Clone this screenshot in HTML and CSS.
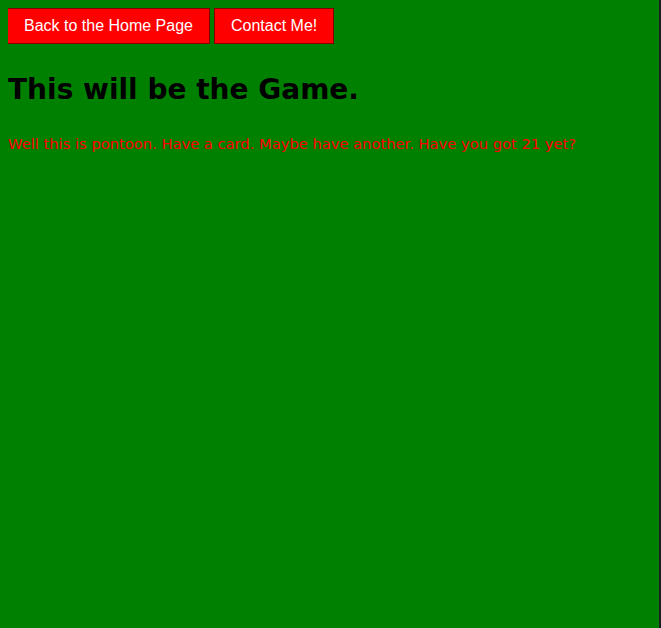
FILE: index.html
```html
<!DOCTYPE html>
<html lang="en">
<head>
<meta charset="utf-8">
<title>Pontoon</title>
<link rel="stylesheet" href="styles.css">
</head>
<body>
<nav class="nav"><a class="btn" href="#">Back to the Home Page</a><a class="btn" href="#">Contact Me!</a></nav>
<h1 class="title">This will be the Game.</h1>
<p class="intro">Well this is pontoon. Have a card. Maybe have another. Have you got 21 yet?</p>
</body>
</html>
```
FILE: styles.css
```css
html {
  background: #008000;
  min-height: 100%;
  box-shadow: inset -2px 0 0 #1e1e1e;
}
body {
  margin: 8px;
  font-family: "Comic Sans MS", "DejaVu Sans", sans-serif;
}
.nav {
  display: flex;
  gap: 4px;
  margin-left: -1px;
}
.btn {
  display: block;
  background: #ff0000;
  color: #ffffff;
  border: 1px solid #800000;
  padding: 8px 16px;
  font-family: "Liberation Sans", Arial, sans-serif;
  font-size: 16px;
  line-height: 18px;
  text-decoration: none;
}
.title {
  margin: 23px 0 21px;
  font-size: 28px;
  line-height: 45px;
  font-weight: bold;
  color: #000000;
}
.intro {
  margin: 21px 0;
  font-size: 14.7px;
  line-height: 22px;
  color: #ff0000;
}
```
